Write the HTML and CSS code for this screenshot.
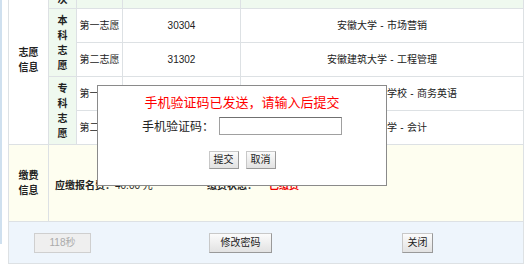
FILE: index.html
```html
<!DOCTYPE html>
<html lang="zh-CN">
<head>
<meta charset="utf-8">
<title>志愿信息</title>
<link rel="stylesheet" href="styles.css">
</head>
<body>
<div class="frame">
  <table class="sheet">
    <colgroup>
      <col class="c-label">
      <col class="c-kind">
      <col class="c-order">
      <col class="c-code">
      <col class="c-major">
    </colgroup>
    <tr class="row-head">
      <td class="label" rowspan="5">志愿<br>信息</td>
      <td class="kind kind-head">层<br>次</td>
      <td class="head"></td>
      <td class="head"></td>
      <td class="head"></td>
    </tr>
    <tr class="row">
      <td class="kind" rowspan="2">本<br>科<br>志<br>愿</td>
      <td>第一志愿</td>
      <td>30304</td>
      <td>安徽大学<span class="dash">-</span>市场营销</td>
    </tr>
    <tr class="row">
      <td>第二志愿</td>
      <td>31302</td>
      <td>安徽建筑大学<span class="dash">-</span>工程管理</td>
    </tr>
    <tr class="row">
      <td class="kind" rowspan="2">专<br>科<br>志<br>愿</td>
      <td>第一志愿</td>
      <td>41205</td>
      <td>安徽商贸高等专科学校<span class="dash">-</span>商务英语</td>
    </tr>
    <tr class="row">
      <td>第二志愿</td>
      <td>41308</td>
      <td>安徽财经大学<span class="dash">-</span>会计</td>
    </tr>
    <tr class="row-fee">
      <td class="label label-fee">缴费<br>信息</td>
      <td class="fee-body" colspan="4">
        <span class="fee-amount"><b>应缴报名费：</b>40.00 元</span><b>缴费状态：</b><b class="paid">已缴费</b>
      </td>
    </tr>
    <tr class="row-actions">
      <td colspan="5">
        <div class="actions">
          <button class="btn btn-wait" disabled>118秒</button>
          <button class="btn btn-pwd">修改密码</button>
          <button class="btn btn-close">关闭</button>
        </div>
      </td>
    </tr>
  </table>
</div>

<div class="modal">
  <p class="modal-title">手机验证码已发送，请输入后提交</p>
  <div class="modal-field">
    <label class="modal-label" for="code">手机验证码：</label>
    <input class="modal-input" id="code" type="text">
  </div>
  <div class="modal-actions">
    <button class="btn btn-sm">提交</button>
    <button class="btn btn-sm">取消</button>
  </div>
</div>
</body>
</html>
```

FILE: styles.css
```css
* { box-sizing: border-box; }

html, body {
  margin: 0;
  padding: 0;
  background: #fff;
}

body {
  font-family: "Liberation Sans", "Noto Sans CJK SC", sans-serif;
  font-size: 10px;
  color: #222;
  overflow: hidden;
  height: 270px;
}

.frame {
  border-left: 2px solid #cfe0ef;
  padding-left: 6px;
  height: 270px;
}

.sheet {
  width: 516px;
  margin-top: -26px;
  table-layout: fixed;
  border-collapse: separate;
  border-spacing: 1px;
  background: #dde1e4;
}

.c-label { width: 39px; }
.c-kind { width: 27px; }
.c-order { width: 45px; }
.c-code { width: 117px; }
.c-major { width: 282px; }

.sheet td {
  padding: 0;
  text-align: center;
  vertical-align: middle;
  background: #fff;
  line-height: 15px;
}

.row-head td,
.row td {
  height: 33px;
}

.dash {
  display: inline-block;
  width: 10px;
  text-align: center;
}

.sheet td.head,
.sheet td.kind {
  background: #eff9ef;
}

.sheet td.kind,
.sheet td.label {
  font-weight: bold;
}

.sheet td.label-fee,
.sheet td.fee-body {
  background: #fefef0;
}

.row-fee td {
  height: 76px;
}

.sheet td.fee-body {
  text-align: left;
  padding-left: 6px;
  padding-top: 5px;
}

.fee-amount {
  display: inline-block;
  width: 152px;
}

.paid {
  color: #e00;
  margin-left: 12px;
}

.row-actions td {
  height: 41px;
  background: #eef5fc;
}

.actions {
  display: flex;
  align-items: center;
  padding-left: 25px;
}

.btn {
  font-family: "Liberation Sans", "Noto Sans CJK SC", sans-serif;
  font-size: 10px;
  color: #222;
  height: 20px;
  padding: 0;
  border: 1px solid #999;
  border-top-color: #c8c8c8;
  border-left-color: #c8c8c8;
  background: linear-gradient(#fbfbfb, #e2e2e2);
  border-radius: 0;
  line-height: 18px;
}

.btn-wait {
  width: 57px;
  color: #aaa;
  border-color: #cfcfcf;
  background: #efefef;
}

.btn-pwd {
  width: 63px;
  margin-left: 118px;
}

.btn-close {
  width: 31px;
  margin-left: 130px;
}

.modal {
  position: absolute;
  left: 97px;
  top: 85px;
  width: 290px;
  height: 101px;
  background: #fff;
  border: 1px solid #8a8a8a;
  display: flex;
  flex-direction: column;
  align-items: center;
  padding-top: 7px;
}

.modal-title {
  margin: 0;
  color: #f00;
  font-family: "Noto Sans CJK SC", sans-serif;
  font-size: 13px;
  line-height: 17px;
}

.modal-field {
  margin-top: 7px;
  display: flex;
  align-items: center;
  gap: 5px;
  height: 18px;
}

.modal-label {
  font-family: "Noto Sans CJK SC", sans-serif;
  font-size: 12px;
  line-height: 18px;
  color: #222;
}

.modal-input {
  width: 123px;
  height: 18px;
  border: 1px solid #a0a0a0;
  border-top-color: #707070;
  padding: 0 2px;
  font-size: 11px;
}

.modal-actions {
  margin-top: 16px;
  display: flex;
  gap: 7px;
}

.btn-sm {
  width: 30px;
  height: 18px;
  line-height: 16px;
}
```
